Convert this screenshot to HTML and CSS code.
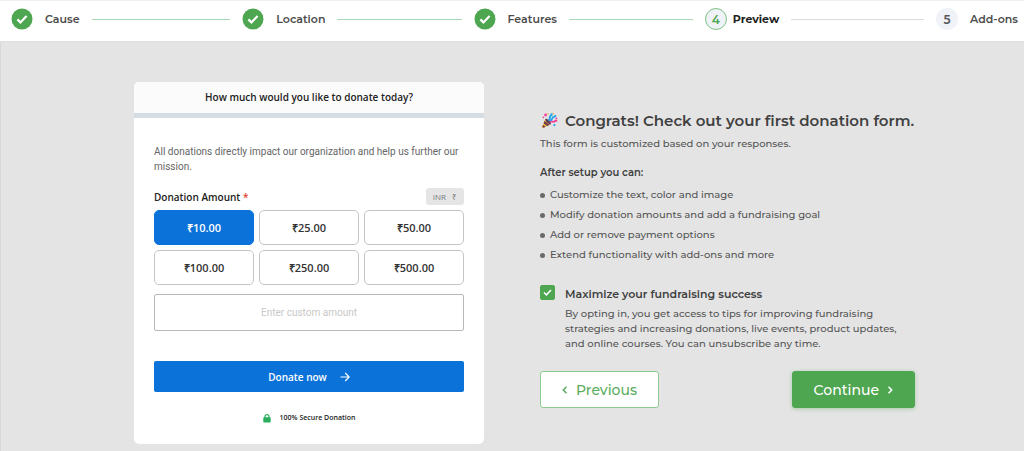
FILE: index.html
```html
<!DOCTYPE html>
<html lang="en">
<head>
    <meta charset="UTF-8">
    <meta name="viewport" content="width=device-width, initial-scale=1.0">
    <title>Donation Form Setup</title>
    <link rel="stylesheet" href="styles.css">
</head>
<body>
    <header class="header">
        <ol class="steps">
            <li class="step">
                <svg class="step-icon" viewBox="0 0 22 22"><circle cx="11" cy="11" r="10.5" fill="#4ea651"/><path d="M6.4 11.4l3 3 6.2-6.4" fill="none" stroke="#fff" stroke-width="2.2"/></svg>
                <span class="step-label">Cause</span>
                <span class="step-line"></span>
            </li>
            <li class="step">
                <svg class="step-icon" viewBox="0 0 22 22"><circle cx="11" cy="11" r="10.5" fill="#4ea651"/><path d="M6.4 11.4l3 3 6.2-6.4" fill="none" stroke="#fff" stroke-width="2.2"/></svg>
                <span class="step-label">Location</span>
                <span class="step-line"></span>
            </li>
            <li class="step">
                <svg class="step-icon" viewBox="0 0 22 22"><circle cx="11" cy="11" r="10.5" fill="#4ea651"/><path d="M6.4 11.4l3 3 6.2-6.4" fill="none" stroke="#fff" stroke-width="2.2"/></svg>
                <span class="step-label">Features</span>
                <span class="step-line"></span>
            </li>
            <li class="step current">
                <span class="step-number">4</span>
                <span class="step-label">Preview</span>
                <span class="step-line"></span>
            </li>
            <li class="step last">
                <span class="step-number">5</span>
                <span class="step-label">Add-ons</span>
            </li>
        </ol>
    </header>

    <main class="main">
        <form class="card">
            <h2 class="card-title">How much would you like to donate today?</h2>
            <div class="card-body">
                <p class="card-text">All donations directly impact our organization and help us further our mission.</p>

                <div class="amount-header">
                    <label class="amount-label" for="customAmount">Donation Amount <span class="required">*</span></label>
                    <span class="currency"><span>INR</span><span>₹</span></span>
                </div>

                <div class="amounts">
                    <button type="button" class="amount selected">₹10.00</button>
                    <button type="button" class="amount">₹25.00</button>
                    <button type="button" class="amount">₹50.00</button>
                    <button type="button" class="amount">₹100.00</button>
                    <button type="button" class="amount">₹250.00</button>
                    <button type="button" class="amount">₹500.00</button>
                </div>

                <input type="text" class="custom-amount" id="customAmount" name="customAmount" placeholder="Enter custom amount">

                <button type="button" class="donate">
                    Donate now
                    <svg width="10" height="10" viewBox="0 0 10 10" fill="none" stroke="#fff" stroke-width="1.2"><path d="M.5 5h8.6M5.2 1l4 4-4 4"/></svg>
                </button>

                <p class="secure">
                    <svg width="8" height="9" viewBox="0 0 8 9"><path d="M2 4V2.7a2 2 0 0 1 4 0V4" fill="none" stroke="#2bad5e" stroke-width="1.2"/><rect x=".3" y="3.2" width="7.4" height="5.4" rx=".8" fill="#2bad5e"/></svg>
                    100% Secure Donation
                </p>
            </div>
        </form>

        <section class="info">
            <h1 class="info-title">
                <svg class="party" viewBox="0 0 18 18">
                    <path d="M1.5 16.6L5.4 6.8c2.6.6 4.6 2.6 5.4 5.4z" fill="#f5b73b"/>
                    <path d="M4.5 9l5 4-2.4 1L3.6 11.2zM3 12.9l2.7 1.9-2 .9L2.2 14.8z" fill="#6b3a4c"/>
                    <ellipse cx="8.1" cy="9.6" rx="1.4" ry="3.6" transform="rotate(-45 8.1 9.6)" fill="#553b5c"/>
                    <path d="M8.6 8.4c2.3-1.4.2-3.8 2-4.8 1.4-.7 1.2-1.6.8-2.3" fill="none" stroke="#2aa7e8" stroke-width="2"/>
                    <path d="M10 10.4c1.8-2.7 3.2.6 4.6-1 .8-1 1.6-.7 2.4 0" fill="none" stroke="#ef3f9b" stroke-width="1.8"/>
                    <path d="M9.6 8.6c3.4-.3 2-3.2 4-3.5 1.6-.2 1.9-.9 2-2" fill="none" stroke="#2aa7e8" stroke-width="2"/>
                    <g fill="#ef3f9b"><circle cx="5.6" cy="3" r="1.4"/><circle cx="3.4" cy="5.4" r=".8"/><circle cx="16.4" cy="6.4" r="1"/></g>
                    <g fill="#2aa7e8"><circle cx="14.4" cy="13.2" r="1.1"/></g>
                    <g fill="#f5b73b"><circle cx="8" cy="1.8" r=".8"/><circle cx="13.4" cy="1.8" r=".8"/></g>
                </svg>
                Congrats! Check out your first donation form.
            </h1>
            <p class="info-text">This form is customized based on your responses.</p>

            <h3 class="list-title">After setup you can:</h3>
            <ul class="list">
                <li>Customize the text, color and image</li>
                <li>Modify donation amounts and add a fundraising goal</li>
                <li>Add or remove payment options</li>
                <li>Extend functionality with add-ons and more</li>
            </ul>

            <div class="optin">
                <input type="checkbox" class="checkbox" id="optin" name="optin" checked>
                <div>
                    <label class="optin-label" for="optin">Maximize your fundraising success</label>
                    <p class="optin-text">By opting in, you get access to tips for improving fundraising strategies and increasing donations, live events, product updates, and online courses. You can unsubscribe any time.</p>
                </div>
            </div>

            <div class="actions">
                <button type="button" class="btn btn-previous">
                    <svg width="6" height="8" viewBox="0 0 6 8" fill="none" stroke="currentColor" stroke-width="1.5"><path d="M4.5.8L1.3 4l3.2 3.2"/></svg>
                    Previous
                </button>
                <button type="button" class="btn btn-continue">
                    Continue
                    <svg width="6" height="8" viewBox="0 0 6 8" fill="none" stroke="currentColor" stroke-width="1.5"><path d="M1.5.8L4.7 4 1.5 7.2"/></svg>
                </button>
            </div>
        </section>
    </main>
</body>
</html>
```

FILE: styles.css
```css
* {
    box-sizing: border-box;
}

body {
    font-family: Montserrat, Inter, sans-serif;
    background-color: #e4e4e4;
    color: #404040;
    margin: 0;
}

h1, h2, h3, p, ol, ul {
    margin: 0;
    padding: 0;
}

button, input {
    font-family: inherit;
}

button {
    cursor: pointer;
}

svg {
    flex-shrink: 0;
}

/* Steps */
.header {
    background-color: #fff;
    border-top: 1px solid #f0f0f0;
    border-bottom: 1px solid #dedede;
    padding: 7px 6px 11px 11px;
}

.steps {
    display: flex;
    list-style: none;
}

.step {
    display: flex;
    align-items: center;
    flex: 1 1 0;
}

.step.last {
    flex: none;
}

.step-icon, .step-number {
    width: 22px;
    height: 22px;
    flex-shrink: 0;
}

.step-number {
    display: flex;
    align-items: center;
    justify-content: center;
    border-radius: 50%;
    background-color: #eff2f6;
    color: #555;
    font-size: 12px;
    font-weight: 600;
}

.step-label {
    margin: 0 12px;
    font-size: 11px;
    font-weight: 600;
    line-height: 16px;
    color: #4c4c4c;
}

.step.last .step-label {
    margin-right: 0;
}

.step-line {
    flex: 1;
    height: 1px;
    margin-right: 12px;
    background-color: #a9d8b5;
}

.current .step-number {
    border: 1px solid #7dc284;
    color: #4ea651;
}

.current .step-label {
    margin-left: 6px;
    font-weight: 700;
    color: #222;
}

.current .step-line {
    background-color: #dcdcdc;
}

/* Donation form */
.main {
    display: grid;
    grid-template-columns: 350fr 375fr;
    gap: 56px;
    align-items: start;
    padding: 40px 109px 7px 133px;
    border-left: 1px solid #d8d8d8;
}

.card {
    font-family: "Segoe UI", "Open Sans", sans-serif;
    background-color: #fff;
    border-radius: 5px;
    overflow: hidden;
}

.card-title {
    padding: 8px 0;
    background-color: #fbfbfb;
    border-bottom: 5px solid #d5dce2;
    font-size: 10px;
    font-weight: 600;
    line-height: 15px;
    text-align: center;
    color: #222;
}

.card-body {
    padding: 26px 20px 19px;
}

.card-text, .custom-amount {
    font-family: "Segoe UI", Roboto, sans-serif;
    font-size: 10px;
}

.card-text {
    line-height: 15px;
    color: #666;
}

.amount-header {
    display: flex;
    align-items: center;
    justify-content: space-between;
    margin: 14px 0 5px;
}

.amount-label {
    font-size: 10px;
    font-weight: 600;
    color: #222;
}

.required {
    color: #e0402a;
}

.currency {
    display: flex;
    gap: 6px;
    padding: 0 7px;
    border-radius: 3px;
    background-color: #e5e5e5;
    font-size: 8px;
    line-height: 17px;
    color: #75797d;
}

.amounts {
    display: grid;
    grid-template-columns: repeat(3, 1fr);
    gap: 5px;
}

.amount {
    height: 35px;
    padding: 0;
    background-color: #fff;
    border: 1px solid #c4c4c4;
    border-radius: 5px;
    font-size: 11px;
    font-weight: 600;
    color: #333;
}

.amount.selected {
    background-color: #0b72d9;
    border-color: #0b72d9;
    color: #fff;
}

.custom-amount {
    display: block;
    width: 100%;
    height: 37px;
    margin: 9px 0 30px;
    border: 1px solid #b8b8b8;
    border-radius: 2px;
    text-align: center;
}

.custom-amount::placeholder {
    color: #c8c8c8;
}

.donate {
    display: flex;
    align-items: center;
    justify-content: center;
    gap: 13px;
    width: 100%;
    height: 31px;
    border: none;
    border-radius: 2px;
    background-color: #0b72d9;
    font-size: 10px;
    font-weight: 600;
    color: #fff;
}

.secure {
    display: flex;
    align-items: center;
    justify-content: center;
    gap: 9px;
    margin-top: 19px;
    font-size: 7px;
    font-weight: 600;
    line-height: 14px;
    color: #222;
}

/* Right side */
.info {
    padding-top: 28px;
}

.info-title {
    display: flex;
    align-items: center;
    gap: 7px;
    font-size: 15px;
    font-weight: 600;
    line-height: 22px;
    white-space: nowrap;
}

.party {
    width: 18px;
    height: 18px;
}

.info-text {
    margin-top: 4px;
    font-size: 10px;
    font-weight: 500;
    line-height: 15px;
    color: #555;
}

.list-title {
    margin-top: 14px;
    font-size: 10px;
    font-weight: 600;
    line-height: 16px;
}

.list {
    margin-top: 4px;
    list-style: none;
}

.list li {
    display: flex;
    align-items: center;
    gap: 5px;
    font-size: 10px;
    font-weight: 500;
    line-height: 20px;
    color: #555;
}

.list li::before {
    content: "";
    width: 5px;
    height: 5px;
    border-radius: 50%;
    background-color: #6a6a6a;
}

.optin {
    display: flex;
    align-items: flex-start;
    gap: 10px;
    margin-top: 20px;
}

.checkbox {
    appearance: none;
    flex-shrink: 0;
    width: 15px;
    height: 15px;
    margin: 0;
    border: 1px solid #4ea651;
    border-radius: 2px;
}

.checkbox:checked {
    background: #4ea651 url("data:image/svg+xml,%3Csvg xmlns='http://www.w3.org/2000/svg' viewBox='0 0 13 13'%3E%3Cpath d='M3 6.5l2.4 2.4L10 4' fill='none' stroke='white' stroke-width='1.6'/%3E%3C/svg%3E") center / 13px no-repeat;
}

.optin-label {
    display: block;
    padding-top: 1px;
    font-size: 11px;
    font-weight: 600;
    line-height: 16px;
}

.optin-text {
    margin-top: 4px;
    font-size: 10px;
    font-weight: 500;
    line-height: 15px;
    color: #555;
}

.actions {
    display: flex;
    justify-content: space-between;
    margin-top: 20px;
}

.btn {
    display: flex;
    align-items: center;
    justify-content: center;
    gap: 8px;
    height: 37px;
    padding: 0 21px;
    border: 1px solid #4ea651;
    border-radius: 3px;
    font-size: 14px;
    font-weight: 500;
}

.btn-previous {
    background-color: #fff;
    border-color: #8fca93;
    color: #5bad60;
}

.btn-continue {
    background-color: #4ea651;
    box-shadow: 0 1px 4px rgba(78, 166, 81, 0.4);
    color: #fff;
}
```
